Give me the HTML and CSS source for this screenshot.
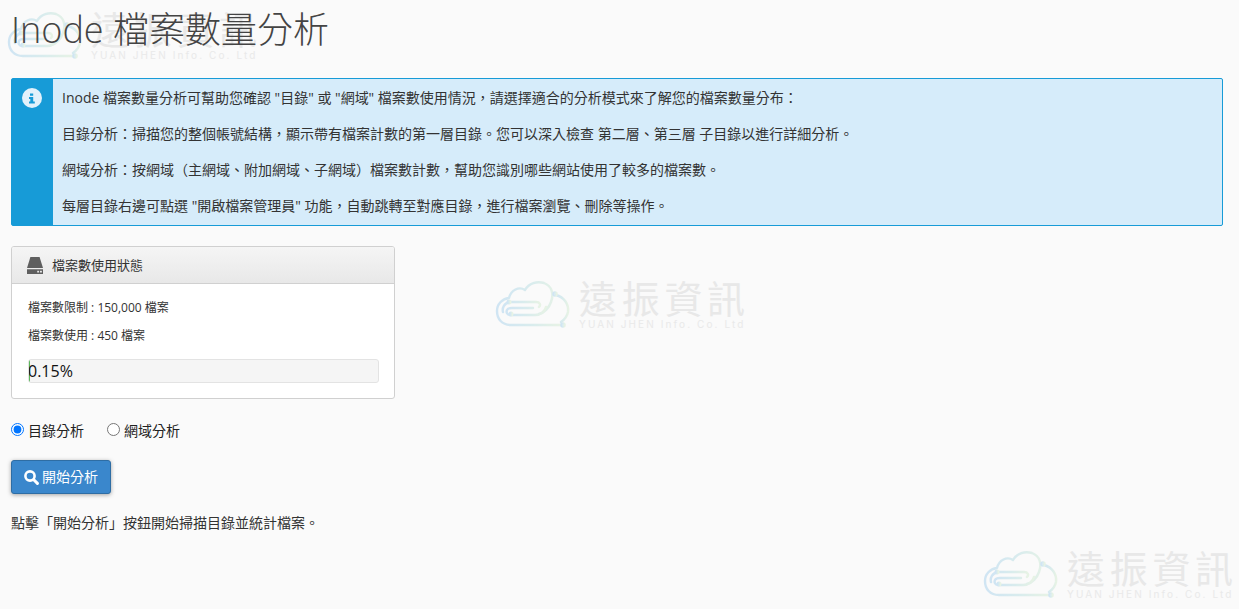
FILE: index.html
```html
<!DOCTYPE html>
<html lang="zh-Hant">
<head>
<meta charset="utf-8">
<title>Inode 檔案數量分析</title>
<link rel="stylesheet" href="styles.css">
</head>
<body>
<svg class="defs" width="0" height="0" aria-hidden="true">
  <defs>
    <linearGradient id="wm" x1="0" y1="0" x2="1" y2="0">
      <stop offset="0" stop-color="#b5d8f0"/>
      <stop offset="0.55" stop-color="#c4e4e6"/>
      <stop offset="1" stop-color="#dcefd8"/>
    </linearGradient>
    <symbol id="cloud" viewBox="0 0 76 50">
      <g fill="none" stroke="url(#wm)" stroke-width="2.4" stroke-linecap="round" stroke-linejoin="round">
        <path d="M66 45H16C7 45 2 39 2 31C2 24 7 19 14 18C16 10 24 6 30 10C34 3 42 1 49 3C57 6 59 14 56 22C54 28 49 33 44 34"/>
        <path d="M61 15C69 17 74 24 73 32C72 37 69 40 66 42"/>
        <path d="M14 22H41C45 22 46 25 44 27M15 22C9 23 7 28 8 32"/>
        <path d="M15 35H40C46 35 50 31 51 27M15 35C12 35 11 32 12 30C13 28 15 28 17 28H38"/>
        <circle cx="14" cy="22" r="1.3"/>
        <circle cx="16" cy="34" r="1.3"/>
        <circle cx="60" cy="14" r="1.6"/>
        <circle cx="68" cy="45" r="1.6"/>
      </g>
    </symbol>
  </defs>
</svg>

<div class="wm wm-a"><svg class="wm-cloud"><use href="#cloud"/></svg><div class="wm-text"><div class="wm-zh">遠振資訊</div><div class="wm-en">YUAN JHEN Info. Co. Ltd</div></div></div>
<div class="wm wm-b"><svg class="wm-cloud"><use href="#cloud"/></svg><div class="wm-text"><div class="wm-zh">遠振資訊</div><div class="wm-en">YUAN JHEN Info. Co. Ltd</div></div></div>
<div class="wm wm-c"><svg class="wm-cloud"><use href="#cloud"/></svg><div class="wm-text"><div class="wm-zh">遠振資訊</div><div class="wm-en">YUAN JHEN Info. Co. Ltd</div></div></div>

<main class="page">
  <h1 class="title">Inode 檔案數量分析</h1>

  <section class="notice">
    <div class="notice-side">
      <svg class="info-icon" viewBox="0 0 20 20"><circle cx="10" cy="10" r="10" fill="#e2f1fb"/><path d="M8 5.5h3.2v2.3H8zM7 9h4.2v4.4h1.6V15.4H7v-2h1.3v-2.4H7z" fill="#179bd7"/></svg>
    </div>
    <div class="notice-body">
      <p>Inode 檔案數量分析可幫助您確認 "目錄" 或 "網域" 檔案數使用情況，請選擇適合的分析模式來了解您的檔案數量分布：</p>
      <p>目錄分析：掃描您的整個帳號結構，顯示帶有檔案計數的第一層目錄。您可以深入檢查 第二層、第三層 子目錄以進行詳細分析。</p>
      <p>網域分析：按網域（主網域、附加網域、子網域）檔案數計數，幫助您識別哪些網站使用了較多的檔案數。</p>
      <p>每層目錄右邊可點選 "開啟檔案管理員" 功能，自動跳轉至對應目錄，進行檔案瀏覽、刪除等操作。</p>
    </div>
  </section>

  <section class="panel">
    <header class="panel-head">
      <svg class="drive-icon" viewBox="0 0 16 17"><path d="M3.4 0h9.2L16 11H0z" fill="#5f5f5f"/><path d="M0 12.2h16V17H0z" fill="#5f5f5f"/><rect x="10.2" y="13.8" width="1.9" height="1.7" fill="#e8e8e8"/><rect x="13" y="13.8" width="1.9" height="1.7" fill="#e8e8e8"/></svg>
      <span>檔案數使用狀態</span>
    </header>
    <div class="panel-body">
      <p>檔案數限制 : 150,000 檔案</p>
      <p>檔案數使用 : 450 檔案</p>
      <div class="progress"><div class="progress-fill"></div><span class="progress-label">0.15%</span></div>
    </div>
  </section>

  <form class="modes">
    <label class="mode"><input type="radio" name="mode" checked>目錄分析</label>
    <label class="mode"><input type="radio" name="mode">網域分析</label>
  </form>

  <button class="btn" type="button">
    <svg class="search-icon" viewBox="0 0 15 15"><circle cx="6" cy="6" r="4.6" fill="none" stroke="#fff" stroke-width="2.6"/><path d="M9.8 9.8l3.6 3.6" stroke="#fff" stroke-width="3" stroke-linecap="round"/></svg>開始分析
  </button>

  <p class="hint">點擊「開始分析」按鈕開始掃描目錄並統計檔案。</p>
</main>
</body>
</html>
```

FILE: styles.css
```css
* { box-sizing: border-box; }
html, body { height: 100%; }
body {
  margin: 0;
  background: #fafafa;
  color: #333;
  font-family: "Open Sans", "Noto Sans CJK TC", sans-serif;
  font-size: 14px;
  line-height: 18px;
  overflow: hidden;
  position: relative;
  text-spacing-trim: space-all;
}
.defs { position: absolute; }
.page { padding: 0 16px 0 11px; position: relative; }

.title {
  margin: 0;
  padding-top: 9px;
  height: 78px;
  font-size: 36px;
  line-height: 42px;
  font-weight: 300;
  color: #444;
}

.notice {
  display: flex;
  height: 148px;
  border: 1px solid #179bd7;
  border-radius: 2px;
  background: #d6ecfa;
  font-size: 14px;
}
.notice-side {
  width: 41px;
  flex: none;
  background: #179bd7;
  padding: 9px 0 0 10px;
}
.info-icon { display: block; width: 20px; height: 20px; }
.notice-body { padding: 10px 0 0 9px; }
.notice-body p { margin: 0 0 18px; line-height: 18px; }

.panel {
  margin-top: 20px;
  width: 384px;
  height: 153px;
  background: #fff;
  border: 1px solid #d0d0d0;
  border-radius: 3px;
  overflow: hidden;
}
.panel-head {
  height: 37px;
  display: flex;
  align-items: center;
  gap: 9px;
  padding-left: 15px;
  background: linear-gradient(#f5f5f5, #e8e8e8);
  border-bottom: 1px solid #d0d0d0;
  font-size: 13px;
}
.drive-icon { width: 16px; height: 17px; }
.panel-body { padding: 15px 15px 0 16px; font-size: 12px; }
.panel-body p { margin: 0 0 10px; line-height: 18px; }
.progress {
  position: relative;
  height: 24px;
  margin-top: 14px;
  background: #f5f5f5;
  border: 1px solid #e3e3e3;
  border-radius: 3px;
  overflow: hidden;
}
.progress-fill { width: 1px; height: 100%; background: #5cb85c; }
.progress-label {
  position: absolute;
  left: -1px;
  top: 0;
  font-size: 16px;
  line-height: 23px;
  color: #111;
}

.modes { display: flex; gap: 23px; margin-top: 21px; height: 20px; align-items: center; }
.mode { display: flex; align-items: center; color: #222; line-height: 20px; padding-top: 1px; }
.mode input { margin: -2px 4px 0 0; width: 13px; height: 13px; }

.btn {
  display: flex;
  align-items: center;
  gap: 3px;
  margin-top: 20px;
  width: 100px;
  height: 34px;
  padding: 0 0 0 12px;
  background: #3a87cc;
  border: 1px solid #2e6da4;
  border-radius: 3px;
  box-shadow: 0 1px 4px rgba(0,0,0,.35);
  color: #fff;
  font: inherit;
}
.search-icon { width: 15px; height: 15px; }

.hint { margin: 20px 0 0; }

.wm { position: absolute; display: flex; gap: 8px; opacity: .75; pointer-events: none; white-space: nowrap; }
.wm-a { left: 7px; top: 10px; }
.wm-b { left: 495px; top: 279px; }
.wm-c { left: 983px; top: 549px; }
.wm-cloud { width: 76px; height: 50px; margin-top: 1px; flex: none; opacity: .8; }
.wm-zh { font-size: 38px; line-height: 38px; letter-spacing: 4.7px; color: #e2e2e2; }
.wm-en { font-family: Inter, sans-serif; font-size: 10px; line-height: 14px; letter-spacing: 2.1px; color: #e4e4e4; }
```
